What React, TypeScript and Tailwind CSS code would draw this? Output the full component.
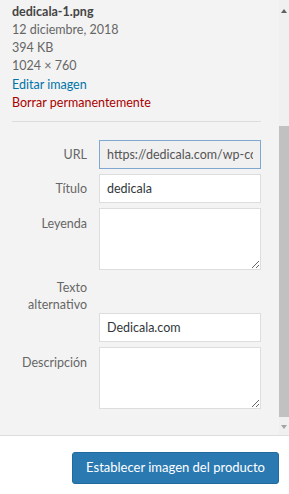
import { useState } from 'react';

const meta = ['12 diciembre, 2018', '394 KB', '1024 × 760'];

function Field({ label, children, top = false }: { label: React.ReactNode; children: React.ReactNode; top?: boolean }) {
  return (
    <div className={`flex gap-3 ${top ? 'items-start' : 'items-center'}`}>
      <label className={`w-[75px] shrink-0 text-right text-[#666] leading-[17px] ${top ? 'pt-[7px]' : ''}`}>{label}</label>
      {children}
    </div>
  );
}

export default function App() {
  const [title, setTitle] = useState('dedicala');
  const [alt, setAlt] = useState('Dedicala.com');

  return (
    <div className="w-[289px] h-[494px] bg-white flex flex-col text-[12px] overflow-hidden" style={{ fontFamily: 'Lato, "Open Sans", sans-serif' }}>
      <div className="h-[436px] flex bg-[#f3f3f3] border-b border-[#dddddd]">
        <div className="flex-1 pl-3 pr-[18px]">
          <div className="pt-[3px] leading-[18px] text-[12.5px]">
            <div className="font-bold text-[#444]">dedicala-1.png</div>
            {meta.map((m) => (
              <div key={m} className="text-[#666]">{m}</div>
            ))}
            <div className="text-[#0073aa] mt-[1px]">Editar imagen</div>
            <div className="text-[#a00]">Borrar permanentemente</div>
          </div>

          <div className="mt-[9px] border-t border-[#dddddd]" />

          <div className="mt-[18px] flex flex-col gap-[5px] text-[12.5px]">
            <Field label="URL">
              <input
                readOnly
                value="https://dedicala.com/wp-content/uploads/2018/12/dedicala-1.png"
                className="w-[162px] h-[29px] px-[7px] bg-[#f0f0f0] border border-[#7fa7cf] text-[#555] outline-none"
              />
            </Field>
            <Field label="Título">
              <input
                value={title}
                onChange={(e) => setTitle(e.target.value)}
                className="w-[162px] h-[29px] px-[7px] bg-white border border-[#dddddd] text-[#32373c] outline-none"
              />
            </Field>
            <Field label="Leyenda" top>
              <textarea className="w-[162px] h-[62px] bg-white border border-[#dddddd] outline-none block" />
            </Field>
            <div className="flex gap-3 mt-[4px]">
              <div className="w-[75px] shrink-0 text-right text-[#666] leading-[17px]">
                Texto
                <br />
                alternativo
              </div>
            </div>
            <div className="flex gap-3 -mt-[5px]">
              <div className="w-[75px] shrink-0" />
              <input
                value={alt}
                onChange={(e) => setAlt(e.target.value)}
                className="w-[162px] h-[29px] px-[7px] bg-white border border-[#dddddd] text-[#32373c] outline-none"
              />
            </div>
            <Field label="Descripción" top>
              <textarea className="w-[162px] h-[62px] bg-white border border-[#dddddd] outline-none block" />
            </Field>
          </div>
        </div>

        <div className="w-[10px] flex flex-col items-center bg-[#f0f0f0]">
          <div className="h-[22px] flex items-center justify-center">
            <div className="w-0 h-0 border-l-[3px] border-r-[3px] border-b-[4px] border-l-transparent border-r-transparent border-b-[#606060]" />
          </div>
          <div className="flex-1 w-full pt-[105px] pb-[2px]">
            <div className="w-full h-[291px] bg-[#c1c1c1]" />
          </div>
          <div className="h-[16px] flex items-center justify-center">
            <div className="w-0 h-0 border-l-[3px] border-r-[3px] border-t-[4px] border-l-transparent border-r-transparent border-t-[#a3a3a3]" />
          </div>
        </div>
      </div>

      <div className="flex-1 flex items-start justify-end pt-[16px] pr-[10px]">
        <button className="h-[32px] px-[13px] rounded-[3px] bg-[#2a79b1] border border-[#1f6a9e] text-white text-[13px]">
          Establecer imagen del producto
        </button>
      </div>
    </div>
  );
}
